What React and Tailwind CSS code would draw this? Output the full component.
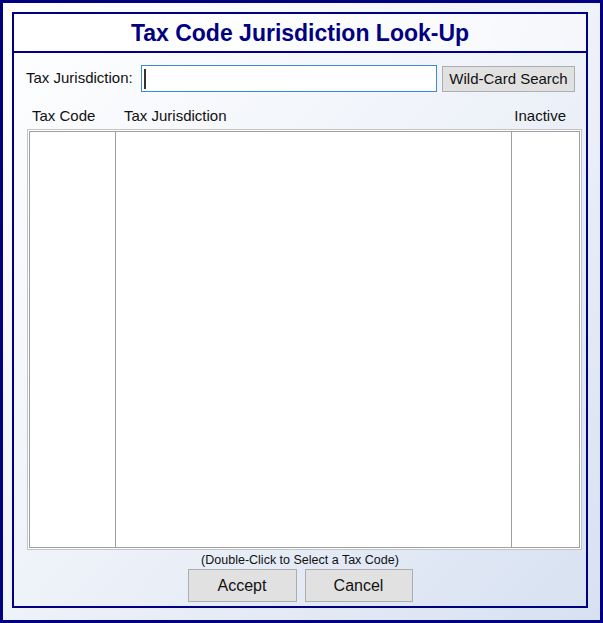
export default function App() {
  const font = { fontFamily: '"Liberation Sans", Arial, sans-serif' };

  return (
    <div
      className="w-[603px] h-[623px] border-[3px] border-[#000080] bg-gradient-to-br from-white via-[#eef2f9] to-[#d7e1f1] pt-[9px] pl-[9px] pr-[12px] pb-[12px]"
      style={font}
    >
      {/* panel */}
      <div className="w-full h-full border-2 border-[#000080] flex flex-col">
        {/* title */}
        <div className="h-[39px] border-b-2 border-[#000080] bg-gradient-to-r from-white to-white/40 flex items-center justify-center">
          <h1 className="text-[23px] font-bold text-[#000080] leading-none mt-[2px]">
            Tax Code Jurisdiction Look-Up
          </h1>
        </div>

        {/* search row */}
        <div className="flex items-center mt-[12px] pl-[12px] pr-[11px] h-[27px]">
          <span className="w-[115px] text-[15px] text-[#111]">Tax Jurisdiction:</span>
          <div className="w-[296px] h-[27px] border border-[#3c8ad6] bg-white flex items-center pl-[2px]">
            <span className="w-[2px] h-[20px] bg-[#333]" />
          </div>
          <button className="ml-[5px] w-[133px] h-[26px] bg-[#e1e1e1] border border-[#adadad] text-[15px] text-[#111] leading-none">
            Wild-Card Search
          </button>
        </div>

        {/* column headers */}
        <div className="flex text-[15px] text-[#111] mt-[15px] h-[18px] items-center">
          <span className="ml-[18px] w-[92px]">Tax Code</span>
          <span className="flex-1">Tax Jurisdiction</span>
          <span className="mr-[20px]">Inactive</span>
        </div>

        {/* list */}
        <div className="ml-[13px] mr-[4px] mt-[4px] h-[421px] border border-[#c4c4c4] bg-white p-px">
          <div className="h-full border border-[#a0a0a0] flex">
            <div className="w-[86px] border-r border-[#a0a0a0]" />
            <div className="flex-1 border-r border-[#a0a0a0]" />
            <div className="w-[67px]" />
          </div>
        </div>

        {/* hint */}
        <div className="text-center text-[12.5px] text-[#111] mt-[2px] leading-[16px]">
          (Double-Click to Select a Tax Code)
        </div>

        {/* buttons */}
        <div className="flex justify-center gap-[8px] mt-[1px]">
          <button className="w-[109px] h-[33px] bg-[#e1e1e1] border border-[#adadad] text-[16px] text-[#111]">
            Accept
          </button>
          <button className="w-[108px] h-[33px] bg-[#e1e1e1] border border-[#adadad] text-[16px] text-[#111]">
            Cancel
          </button>
        </div>
      </div>
    </div>
  );
}
